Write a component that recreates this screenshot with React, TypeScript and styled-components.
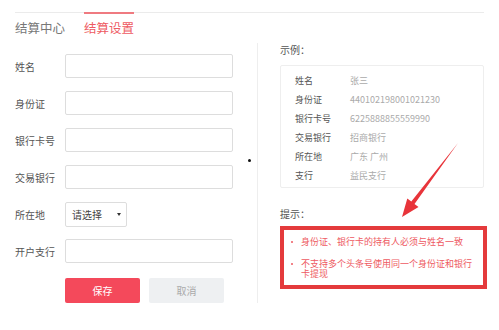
import React from "react";
import styled, { createGlobalStyle } from "styled-components";

const GlobalStyle = createGlobalStyle`
  html, body {
    margin: 0;
    padding: 0;
    background: #fff;
    font-family: "Noto Sans CJK SC", "Liberation Sans", sans-serif;
  }
`;

const fields = ["姓名", "身份证", "银行卡号", "交易银行"];

const sample = [
  ["姓名", "张三"],
  ["身份证", "440102198001021230"],
  ["银行卡号", "6225888855559990"],
  ["交易银行", "招商银行"],
  ["所在地", "广东 广州"],
  ["支行", "益民支行"],
];

const tips = [
  "身份证、银行卡的持有人必须与姓名一致",
  "不支持多个头条号使用同一个身份证和银行卡提现",
];

function App() {
  return (
    <Page>
      <GlobalStyle />
      <Tabs>
        <Tab>结算中心</Tab>
        <Tab active>结算设置</Tab>
      </Tabs>

      <Body>
        <FormCol>
          {fields.map((f) => (
            <Row key={f}>
              <Label>{f}</Label>
              <Input />
            </Row>
          ))}
          <Row>
            <Label>所在地</Label>
            <Select>
              请选择
              <Caret />
            </Select>
          </Row>
          <Row>
            <Label>开户支行</Label>
            <Input />
          </Row>
          <Buttons>
            <Btn primary>保存</Btn>
            <Btn>取消</Btn>
          </Buttons>
        </FormCol>

        <Dot />

        <SideCol>
          <Heading>示例：</Heading>
          <SampleBox>
            {sample.map(([k, v]) => (
              <SampleRow key={k}>
                <SampleKey>{k}</SampleKey>
                <SampleVal>{v}</SampleVal>
              </SampleRow>
            ))}
          </SampleBox>
          <Heading gap>提示：</Heading>
          <TipBox>
            {tips.map((t) => (
              <Tip key={t}>{t}</Tip>
            ))}
          </TipBox>
        </SideCol>

        {/* red annotation arrow drawn over the screenshot */}
        <Arrow width="70" height="86" viewBox="0 0 70 86">
          <polygon
            points="63,5 19.5,65.9 23.5,68.9 7,79 12.3,60.5 16.3,63.5"
            fill="#e8343a"
          />
        </Arrow>
      </Body>
    </Page>
  );
}

export default App;

const Page = styled.div`
  width: 499px;
  height: 330px;
  padding: 12px 15px 0 15px;
  box-sizing: border-box;
  overflow: hidden;
`;

const Tabs = styled.div`
  display: flex;
  gap: 19px;
  border-top: 1px solid #ebebeb;
  width: 469px;
`;

const Tab = styled.div<{ active?: boolean }>`
  margin-top: -1px;
  padding-top: 6px;
  height: 30px;
  box-sizing: border-box;
  border-top: 2px solid ${(p) => (p.active ? "#ef7a80" : "transparent")};
  color: ${(p) => (p.active ? "#ee5a62" : "#777")};
  font-size: 12.5px;
  line-height: 16px;
`;

const Body = styled.div`
  position: relative;
  display: flex;
  margin-top: 12px;
`;

const FormCol = styled.div`
  flex: 0 0 242px;
  display: flex;
  flex-direction: column;
  gap: 13px;
`;

const Row = styled.div`
  display: flex;
  align-items: center;
  height: 24px;
`;

const Label = styled.div`
  width: 50px;
  font-size: 10px;
  color: #555;
`;

const Input = styled.div`
  width: 168px;
  height: 24px;
  box-sizing: border-box;
  border: 1px solid #ddd;
  border-radius: 2px;
  background: #fff;
`;

const Select = styled.div`
  width: 62px;
  height: 25px;
  box-sizing: border-box;
  border: 1px solid #ddd;
  border-radius: 2px;
  display: flex;
  align-items: center;
  justify-content: space-between;
  padding: 0 5px 0 6px;
  font-size: 10px;
  color: #444;
`;

const Caret = styled.span`
  width: 0;
  height: 0;
  border-left: 2px solid transparent;
  border-right: 2px solid transparent;
  border-top: 3px solid #333;
`;

const Buttons = styled.div`
  display: flex;
  gap: 9px;
  margin: 2px 0 0 50px;
`;

const Btn = styled.div<{ primary?: boolean }>`
  width: 75px;
  height: 25px;
  border-radius: 2px;
  display: flex;
  align-items: center;
  justify-content: center;
  font-size: 10px;
  background: ${(p) => (p.primary ? "#f4495b" : "#eef0f2")};
  color: ${(p) => (p.primary ? "#fff" : "#aaa")};
`;

const Dot = styled.span`
  position: absolute;
  left: 233px;
  top: 105px;
  width: 3px;
  height: 3px;
  border-radius: 50%;
  background: #111;
`;

const SideCol = styled.div`
  flex: 0 0 auto;
  border-left: 1px solid #eee;
  height: 260px;
  margin-top: -11px;
  padding-left: 22px;
  width: 207px;
`;

const Heading = styled.div<{ gap?: boolean }>`
  font-size: 10px;
  color: #555;
  line-height: 14px;
  margin: ${(p) => (p.gap ? "19px 0 5px" : "0 0 8px")};
`;

const SampleBox = styled.div`
  width: 204px;
  height: 123px;
  box-sizing: border-box;
  border: 1px solid #eee;
  border-radius: 2px;
  padding: 5px 0 0 14px;
`;

const SampleRow = styled.div`
  display: flex;
  height: 19px;
  align-items: center;
  font-size: 9px;
`;

const SampleKey = styled.span`
  width: 55px;
  color: #555;
`;

const SampleVal = styled.span`
  color: #aaa;
`;

const TipBox = styled.ul`
  list-style: none;
  margin: 0;
  width: 207px;
  height: 63px;
  box-sizing: border-box;
  border: 4px solid #e43a3c;
  padding: 0 7px 0 0;
`;

const Tip = styled.li`
  position: relative;
  padding-left: 17px;
  font-size: 9px;
  line-height: 10px;
  color: #ee5a62;
  margin-top: 7px;
  & + & {
    margin-top: 12px;
  }
  &::before {
    content: "";
    position: absolute;
    left: 7px;
    top: 4px;
    width: 2px;
    height: 2px;
    border-radius: 50%;
    background: #ee5a62;
  }
`;

const Arrow = styled.svg`
  position: absolute;
  left: 380px;
  top: 84px;
`;
